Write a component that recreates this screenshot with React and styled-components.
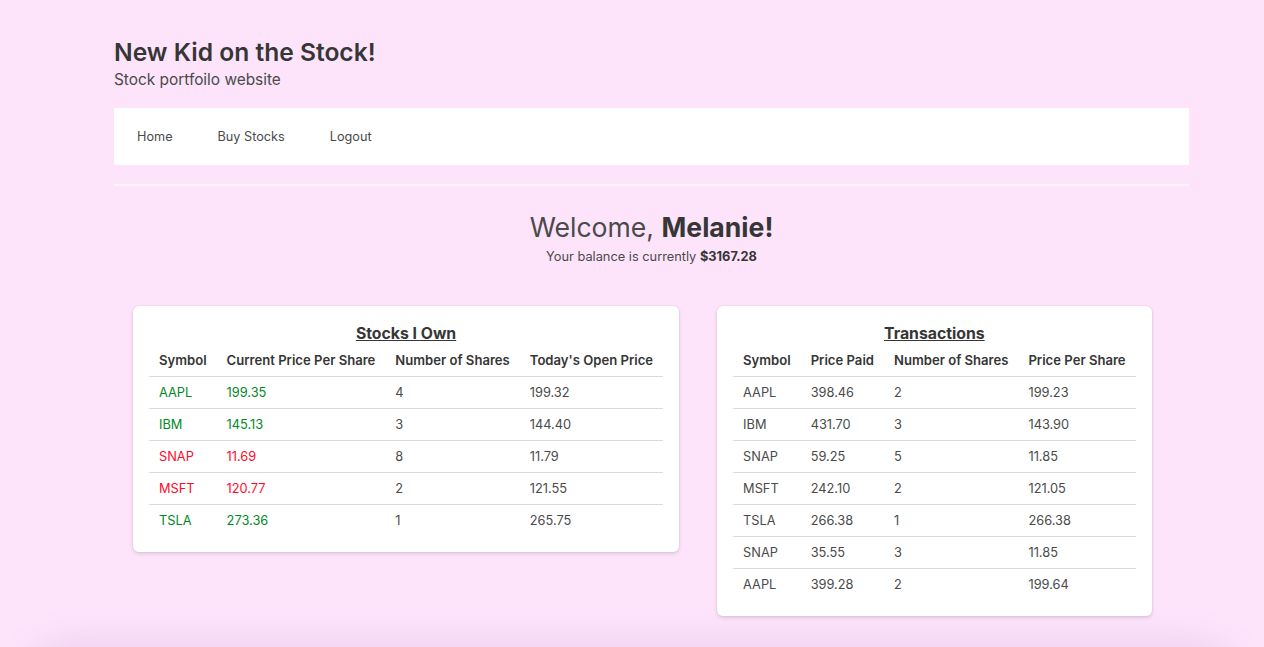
import React from 'react';
import styled, { createGlobalStyle } from 'styled-components';

const GlobalStyle = createGlobalStyle`
  body {
    margin: 0;
    background: #fde4fb;
    font-family: Inter, "Noto Sans", sans-serif;
    color: #4a4a4a;
  }
`;

const Page = styled.div`
  height: 100vh;
  overflow: hidden;
`;

const Container = styled.div`
  width: 1075px;
  margin-left: 114px;
  padding-top: 38px;
`;

const Title = styled.h1`
  margin: 0;
  font-size: 24.6px;
  line-height: 29px;
  font-weight: 600;
  color: #363636;
`;

const Subtitle = styled.p`
  margin: 3px 0 0;
  font-size: 15.4px;
  line-height: 20px;
  color: #4a4a4a;
`;

const Navbar = styled.nav`
  margin-top: 18px;
  height: 57px;
  background: #fff;
  display: flex;
  align-items: center;
`;

const NavItem = styled.a`
  padding: 0 22px 0 23px;
  font-size: 12.7px;
  color: #4a4a4a;
  cursor: pointer;
`;

const Divider = styled.hr`
  margin: 19px 0 0;
  border: none;
  height: 2px;
  background: #f5f5f5;
`;

const Welcome = styled.div`
  text-align: center;
  margin-top: 24px;
`;

const Greeting = styled.h2`
  margin: 0;
  font-size: 26.6px;
  line-height: 34px;
  font-weight: 400;
  color: #4a4a4a;

  strong {
    font-weight: 700;
    color: #363636;
  }
`;

const Balance = styled.p`
  margin: 3px 0 0;
  font-size: 12.8px;
  line-height: 19px;

  strong {
    color: #363636;
    font-weight: 700;
  }
`;

const Cards = styled.div`
  display: flex;
  align-items: flex-start;
  gap: 38px;
  padding-left: 19px;
  margin-top: 40px;
`;

const Card = styled.div`
  background: #fff;
  border-radius: 6px;
  padding: 16px;
  box-shadow: 0 2px 4px rgba(10, 10, 10, 0.12), 0 0 0 1px rgba(10, 10, 10, 0.03);
`;

const CardTitle = styled.h3`
  margin: 0;
  text-align: center;
  font-size: 15.8px;
  line-height: 23px;
  font-weight: 700;
  color: #363636;
  text-decoration: underline;
`;

const Table = styled.table`
  border-collapse: collapse;
  font-size: 12.8px;
`;

const Th = styled.th`
  text-align: left;
  font-size: 13.1px;
  font-weight: 600;
  color: #363636;
  padding: 6px 10px;
  line-height: 19px;
  border-bottom: 1px solid #dbdbdb;
  white-space: nowrap;
`;

const Td = styled.td`
  padding: 6px 10px;
  line-height: 19px;
  color: ${p => (p.$trend === 'up' ? '#008a1f' : p.$trend === 'down' ? '#ff0a2a' : '#4a4a4a')};
  white-space: nowrap;
`;

const Row = styled.tr`
  border-bottom: 1px solid #dbdbdb;

  &:last-child {
    border-bottom: none;
  }
`;

const Footer = styled.footer`
  margin: 34px 30px 0;
  height: 120px;
  box-shadow: 0 -4px 40px rgba(150, 80, 150, 0.16);
  border-radius: 40px;
`;

const owned = [
  ['AAPL', '199.35', '4', '199.32', 'up'],
  ['IBM', '145.13', '3', '144.40', 'up'],
  ['SNAP', '11.69', '8', '11.79', 'down'],
  ['MSFT', '120.77', '2', '121.55', 'down'],
  ['TSLA', '273.36', '1', '265.75', 'up'],
];

const transactions = [
  ['AAPL', '398.46', '2', '199.23'],
  ['IBM', '431.70', '3', '143.90'],
  ['SNAP', '59.25', '5', '11.85'],
  ['MSFT', '242.10', '2', '121.05'],
  ['TSLA', '266.38', '1', '266.38'],
  ['SNAP', '35.55', '3', '11.85'],
  ['AAPL', '399.28', '2', '199.64'],
];

export default function App() {
  return (
    <Page>
      <GlobalStyle />
      <Container>
        <Title>New Kid on the Stock!</Title>
        <Subtitle>Stock portfoilo website</Subtitle>
        <Navbar>
          <NavItem>Home</NavItem>
          <NavItem>Buy Stocks</NavItem>
          <NavItem>Logout</NavItem>
        </Navbar>
        <Divider />
        <Welcome>
          <Greeting>
            Welcome, <strong>Melanie!</strong>
          </Greeting>
          <Balance>
            Your balance is currently <strong>$3167.28</strong>
          </Balance>
        </Welcome>
        <Cards>
          <Card>
            <CardTitle>Stocks I Own</CardTitle>
            <Table>
              <thead>
                <tr>
                  <Th>Symbol</Th>
                  <Th>Current Price Per Share</Th>
                  <Th>Number of Shares</Th>
                  <Th>Today's Open Price</Th>
                </tr>
              </thead>
              <tbody>
                {owned.map(([sym, price, n, open, trend]) => (
                  <Row key={sym}>
                    <Td $trend={trend}>{sym}</Td>
                    <Td $trend={trend}>{price}</Td>
                    <Td>{n}</Td>
                    <Td>{open}</Td>
                  </Row>
                ))}
              </tbody>
            </Table>
          </Card>
          <Card>
            <CardTitle>Transactions</CardTitle>
            <Table>
              <thead>
                <tr>
                  <Th>Symbol</Th>
                  <Th>Price Paid</Th>
                  <Th>Number of Shares</Th>
                  <Th>Price Per Share</Th>
                </tr>
              </thead>
              <tbody>
                {transactions.map(([sym, paid, n, per], i) => (
                  <Row key={i}>
                    <Td>{sym}</Td>
                    <Td>{paid}</Td>
                    <Td>{n}</Td>
                    <Td>{per}</Td>
                  </Row>
                ))}
              </tbody>
            </Table>
          </Card>
        </Cards>
      </Container>
      <Footer />
    </Page>
  );
}
